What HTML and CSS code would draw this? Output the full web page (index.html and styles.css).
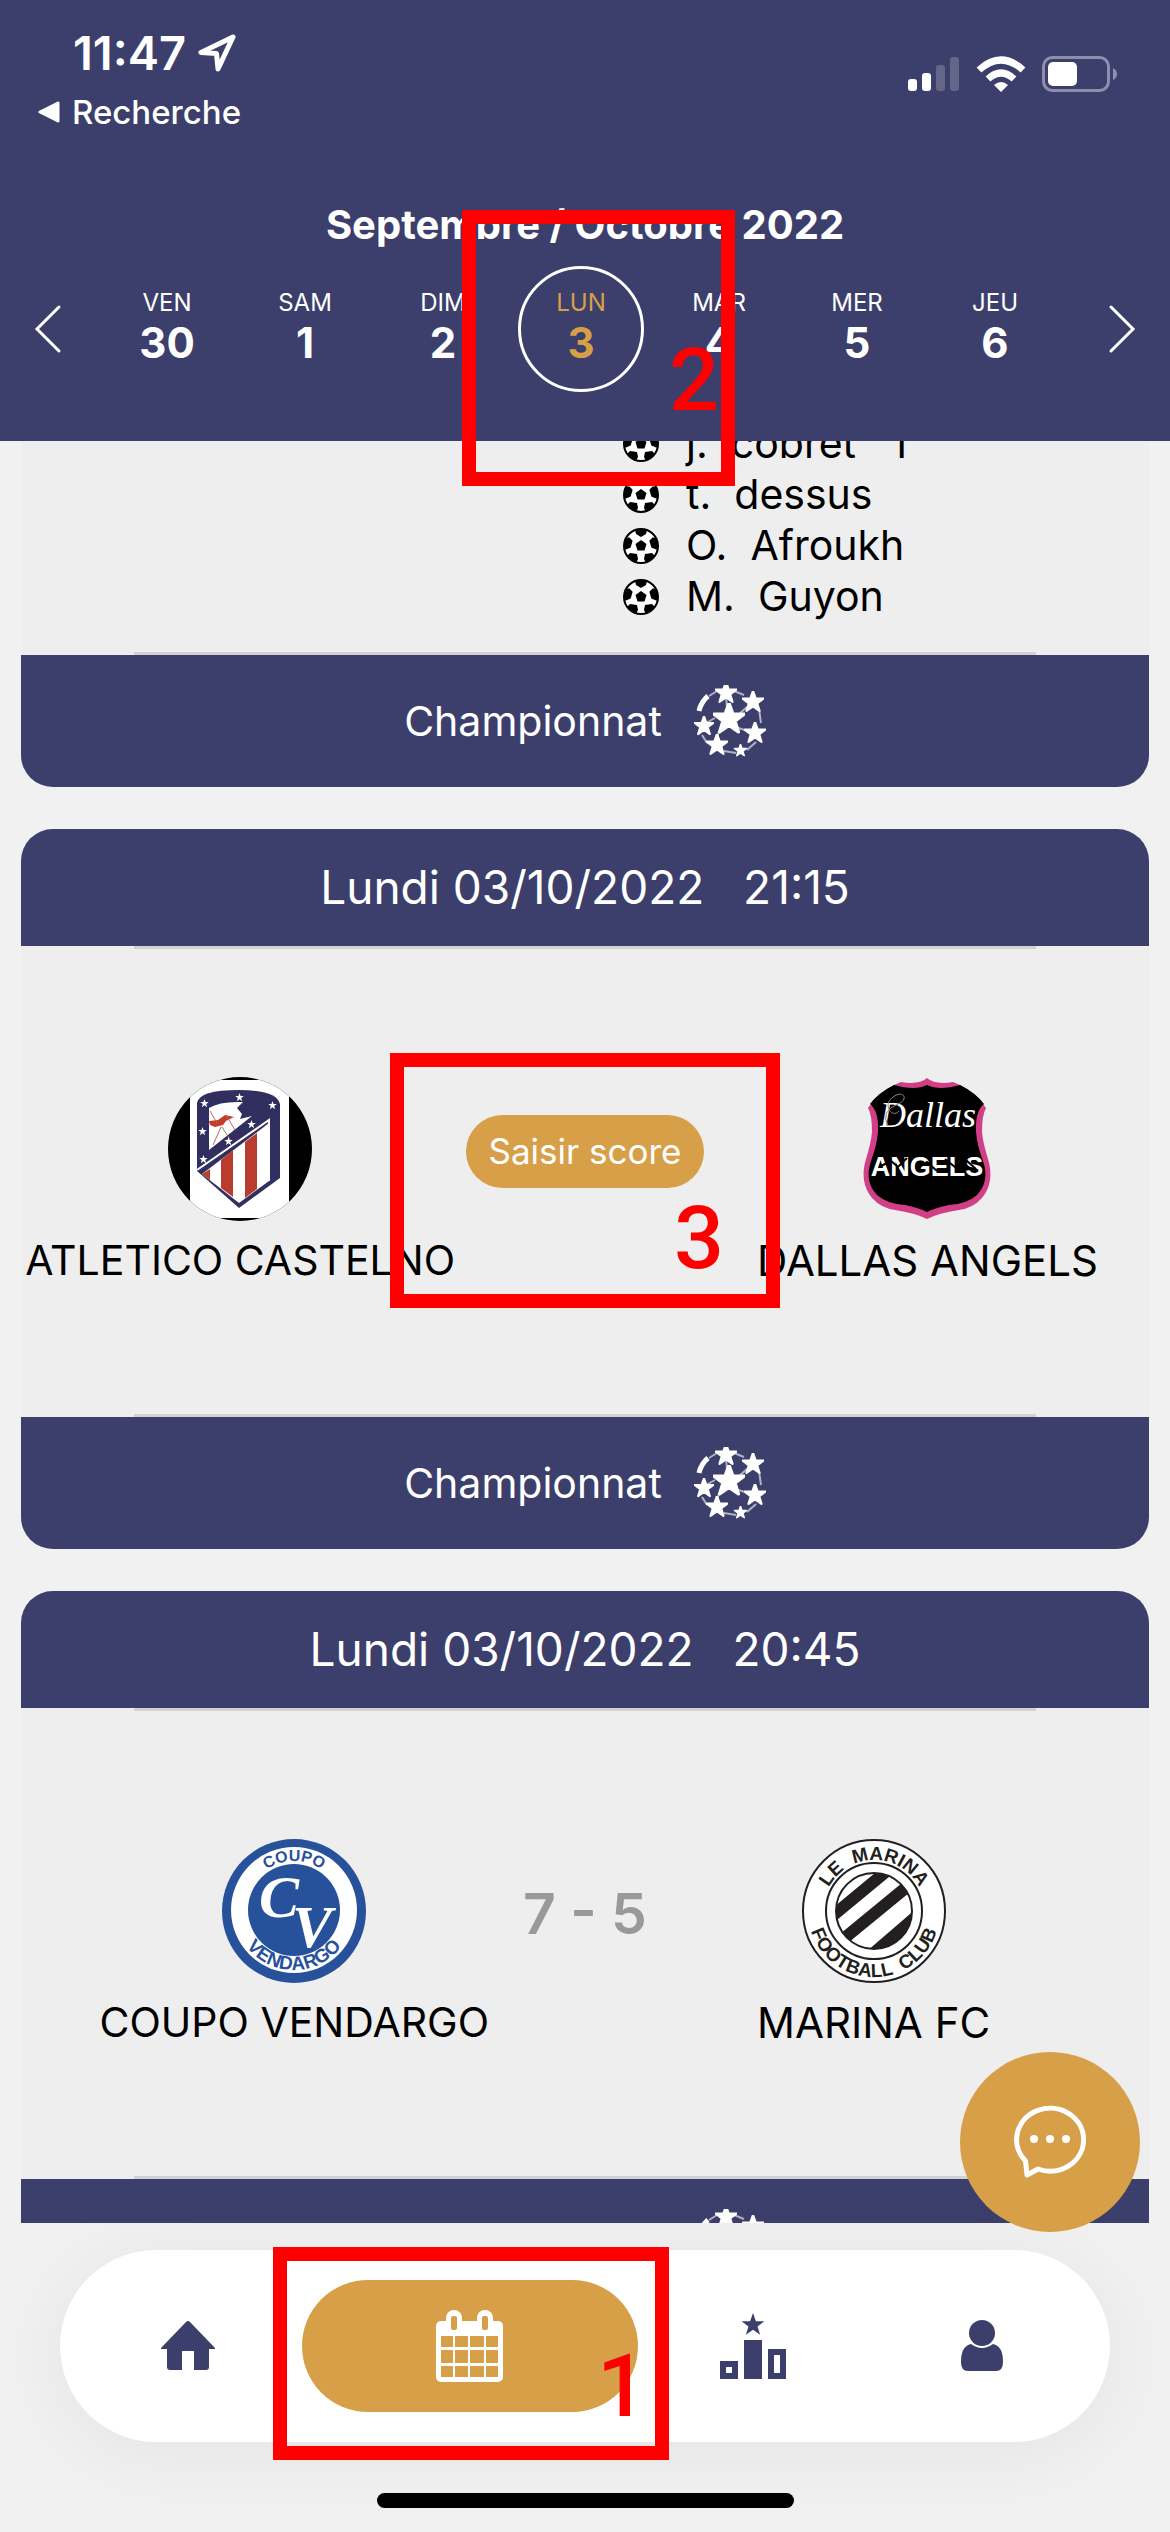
FILE: index.html
```html
<!DOCTYPE html>
<html lang="fr">
<head>
<meta charset="utf-8">
<meta name="viewport" content="width=device-width, initial-scale=1">
<title>Matchs</title>
<link rel="stylesheet" href="styles.css">
</head>
<body>
<svg class="sprite" aria-hidden="true">
  <symbol id="star" viewBox="-10 -10 20 20"><path d="M0-10 2.4-3.2 9.5-3.1 3.8 1.2 5.9 8.1 0 4-5.9 8.1-3.8 1.2-9.5-3.1-2.4-3.2Z"/></symbol>
  <symbol id="ball" viewBox="0 0 36 36">
    <circle cx="18" cy="18" r="17" fill="#fff" stroke="#000" stroke-width="2"/>
    <g fill="#000"><path d="M18 12 23.500 16 21.500 22.500H14.500L12.500 16Z"/><path d="M12 2Q18-1 24 2L23 6 18 9 13 6Z"/><path d="M35 13Q36 20 33 24L28 21 27 14 31 11Z" transform="rotate(-8 18 18)"/><path d="M1 13Q0 20 3 24L8 21 9 14 5 11Z" transform="rotate(8 18 18)"/><path d="M4 28 7 25 14 26 15 31 13 35Q8 33 4 28Z"/><path d="M32 28 29 25 22 26 21 31 23 35Q28 33 32 28Z"/></g>
  </symbol>
  <symbol id="starball" viewBox="0 0 72 72">
    <g fill="#fff" stroke="#fff" stroke-width="2" stroke-linejoin="round">
      <use href="#star" x="19" y="18" width="32" height="32"/>
      <use href="#star" x="21" y="-3" width="22" height="22"/>
      <use href="#star" x="48" y="6" width="22" height="22"/>
      <use href="#star" x="50" y="37" width="22" height="22"/>
      <use href="#star" x="39" y="59" width="15" height="13"/>
      <use href="#star" x="12" y="49" width="22" height="22"/>
      <use href="#star" x="0" y="31" width="20" height="20"/>
    </g>
    <path d="M5 26Q7 17 14 11" fill="none" stroke="#fff" stroke-width="5"/>
    <path d="M33 22 32 12M44 30 53 22M41 42 54 46M25 46 23 53M21 33 12 38M40 6 50 10M65 24 67 38M62 57 53 65M30 66 42 68M13 58 8 50M15 11 23 6" stroke="#fff" stroke-opacity=".6" stroke-width="2"/>
  </symbol>
</svg>

<header class="top">
  <div class="status">
    <div class="status-left">
      <div class="clock">11:47
        <svg width="38" height="38" viewBox="0 0 38 38"><path d="M35 3 3 18.500 18.500 19.500 20 35Z" fill="none" stroke="#fff" stroke-width="5" stroke-linejoin="round"/></svg>
      </div>
      <a class="back" href="#">
        <svg width="22" height="22" viewBox="0 0 22 22"><path d="M2 11 20 2V20Z" fill="#fff" stroke="#fff" stroke-width="3" stroke-linejoin="round"/></svg>Recherche</a>
    </div>
    <div class="status-right">
      <svg width="52" height="36" viewBox="0 0 52 36" fill="#fff"><rect y="23" width="9" height="12" rx="3"/><rect x="14" y="17" width="9" height="18" rx="3"/><g opacity=".2"><rect x="28" y="9" width="9" height="26" rx="3"/><rect x="42" y="1" width="9" height="34" rx="3"/></g></svg>
      <svg width="50" height="37" viewBox="0 0 50 37" fill="none" stroke="#fff" stroke-width="7"><path d="M3 14Q25-6 47 14"/><path d="M12 23Q25 11 38 23"/><path d="M25 36 18 29Q25 23 32 29Z" fill="#fff" stroke="none"/></svg>
      <svg width="76" height="36" viewBox="0 0 76 36"><rect x="1.500" y="1.500" width="65" height="33" rx="9" fill="none" stroke="#8c8fac" stroke-width="3"/><rect x="6" y="6" width="29" height="24" rx="5" fill="#fff"/><path d="M71 12Q75 14 75 18T71 24Z" fill="#8c8fac"/></svg>
    </div>
  </div>
  <h1>Septembre / Octobre 2022</h1>
  <div class="week">
    <button class="arrow" aria-label="Semaine précédente"><svg width="28" height="50" viewBox="0 0 28 50"><path d="M25 3 3 25 25 47" fill="none" stroke="#fff" stroke-width="3" stroke-linecap="round"/></svg></button>
    <div class="days">
      <button class="day">VEN<b>30</b></button>
      <button class="day">SAM<b>1</b></button>
      <button class="day">DIM<b>2</b></button>
      <button class="day on">LUN<b>3</b></button>
      <button class="day">MAR<b>4</b></button>
      <button class="day">MER<b>5</b></button>
      <button class="day">JEU<b>6</b></button>
    </div>
    <button class="arrow" aria-label="Semaine suivante"><svg width="28" height="50" viewBox="0 0 28 50"><path d="M3 3 25 25 3 47" fill="none" stroke="#fff" stroke-width="3" stroke-linecap="round"/></svg></button>
  </div>
</header>

<main class="matches">
  <article class="card first">
    <div class="body">
      <ul class="goals">
        <li><svg><use href="#ball"/></svg>j. &nbsp;cobret &nbsp; 1</li>
        <li><svg><use href="#ball"/></svg>t. &nbsp;dessus</li>
        <li><svg><use href="#ball"/></svg>O. &nbsp;Afroukh</li>
        <li><svg><use href="#ball"/></svg>M. &nbsp;Guyon</li>
      </ul>
      <hr>
    </div>
    <footer>Championnat<svg><use href="#starball"/></svg></footer>
  </article>

  <article class="card">
    <h2>Lundi 03/10/2022 &nbsp; 21:15</h2>
    <div class="body">
      <hr>
      <div class="teams">
        <div class="side home wide">
          <div class="team">
            <svg class="crest" viewBox="0 0 144 144">
              <clipPath id="disc"><circle cx="72" cy="72" r="72"/></clipPath>
              <g clip-path="url(#disc)">
                <rect width="144" height="144"/><rect x="22" y="3" width="99" height="138" fill="#fff"/>
                <path d="M29 26Q31 13 71 13 109 13 112 27V101L71 131 29 94Z" fill="#302f60"/>
                <path d="M34 97 101 46V104L71 126Z" fill="#fff"/>
                <path d="M53 83 65 73V120L53 111ZM77 65 89 56V112L77 121ZM34 97 42 92V103Z" fill="#b93c2e"/>
                <path d="M41 31Q52 24 75 25L69 31 74 37 72 42 84 39 41 73Z" fill="#fff"/>
                <path d="M29 93 101 43V104" fill="none" stroke="#fff" stroke-width="2"/>
                <path d="M41 44 50 43 57 38 66 40 58 44 55 48 47 50 42 48Z" fill="#c63c2b"/>
                <path d="M42 34 49 46M58 38 67 53M54 50 63 64M53 50 45 68" fill="none" stroke="#b96b5f"/>
                <g fill="#fff"><use href="#star" x="67" y="16" width="9" height="9"/><use href="#star" x="32" y="22" width="9" height="9"/><use href="#star" x="100" y="24" width="9" height="9"/><use href="#star" x="79" y="43" width="9" height="9"/><use href="#star" x="30" y="50" width="9" height="9"/><use href="#star" x="56" y="60" width="9" height="9"/><use href="#star" x="31" y="78" width="9" height="9"/></g>
              </g>
            </svg>
            <span>ATLETICO CASTELNO</span>
          </div>
        </div>
        <div class="middle"><button class="enter">Saisir score</button></div>
        <div class="side">
          <div class="team">
            <svg class="crest" viewBox="0 0 144 144">
              <path d="M72 1Q80 8 98 5L105 8Q121 16 131 31 127 38 127 55 128 66 133 82 140 105 127 121 118 131 104 133 84 136 72 142 60 136 40 133 26 131 17 121 4 105 11 82 16 66 17 55 17 38 13 31 23 16 39 8L46 5Q64 8 72 1Z" fill="#d33f86"/>
              <path d="M72 8Q84 14 105 8 121 16 129 27 120 34 121 55 122 68 128 84 135 104 122 118 112 127 94 128 80 131 72 135 64 131 50 128 32 127 22 118 9 104 16 84 22 68 23 55 24 34 15 27 23 16 39 8 60 14 72 8Z"/>
              <text x="73" y="50" class="script">Dallas</text>
              <path d="M33 49Q25 34 43 27C54 23 49 12 38 20S37 42 44 34" fill="none" stroke="#888"/>
              <text x="72" y="99" class="angels">ANGELS</text>
              <path d="M24 90 36 84 43 90 52 81M62 92 72 85 82 94M90 82 100 90 112 84 121 92" fill="none" stroke="#000" stroke-width="2"/>
            </svg>
            <span>DALLAS ANGELS</span>
          </div>
        </div>
      </div>
      <hr>
    </div>
    <footer>Championnat<svg><use href="#starball"/></svg></footer>
  </article>

  <article class="card">
    <h2>Lundi 03/10/2022 &nbsp; 20:45</h2>
    <div class="body">
      <hr>
      <div class="teams">
        <div class="side home">
          <div class="team">
            <svg class="crest" viewBox="0 0 144 144">
              <circle cx="72" cy="72" r="72" fill="#28519c"/><circle cx="72" cy="71" r="63" fill="#fff"/><circle cx="72" cy="71" r="46" fill="#28519c"/>
              <path id="cv-top" d="M23 71A49 49 0 0 1 121 71" fill="none"/><path id="cv-bottom" d="M12 71A60 60 0 0 0 132 71" fill="none"/>
              <text class="ring blue"><textPath href="#cv-top" startOffset="50%">COUPO</textPath></text>
              <text class="ring blue large"><textPath href="#cv-bottom" startOffset="50%">VENDARGO</textPath></text>
              <text x="57" y="78" class="mono">C</text><text x="90" y="108" class="mono">V</text>
            </svg>
            <span>COUPO VENDARGO</span>
          </div>
        </div>
        <div class="middle"><strong class="score">7 - 5</strong></div>
        <div class="side">
          <div class="team">
            <svg class="crest" viewBox="0 0 144 144">
              <circle cx="72" cy="72" r="71" fill="#fff" stroke="#231f20" stroke-width="2"/><circle cx="72" cy="72" r="48" fill="#fff" stroke="#231f20" stroke-width="2"/>
              <clipPath id="core"><circle cx="72" cy="72" r="38"/></clipPath>
              <g clip-path="url(#core)"><path d="M22 84 92 26M34 106 112 42M58 126 130 64" stroke="#231f20" stroke-width="12"/></g>
              <circle cx="72" cy="72" r="38" fill="none" stroke="#231f20" stroke-width="2"/>
              <path id="m-top" d="M21 72A51 51 0 0 1 123 72" fill="none"/><path id="m-bottom" d="M6 72A66 66 0 0 0 138 72" fill="none"/>
              <text class="ring dark"><textPath href="#m-top" startOffset="50%">LE &#160;MARINA</textPath></text>
              <text class="ring dark"><textPath href="#m-bottom" startOffset="50%">FOOTBALL &#160;CLUB</textPath></text>
            </svg>
            <span>MARINA FC</span>
          </div>
        </div>
      </div>
      <hr>
    </div>
    <footer>Championnat<svg><use href="#starball"/></svg></footer>
  </article>
</main>

<div class="bottom">
  <nav>
    <a href="#" aria-label="Accueil"><svg width="54" height="50" viewBox="0 0 54 50" fill="#3c3f6b"><path d="M25 1Q27-1 29 1L54 27V28H48V46Q48 49 45 49H33V30H21V49H9Q6 49 6 46V28H0V27Z"/></svg></a>
    <a href="#" class="on" aria-label="Calendrier"><svg width="68" height="72" viewBox="0 0 68 72">
      <rect x="0" y="11" width="67" height="61" rx="5" fill="#fff"/><rect x="10" y="0" width="16" height="24" rx="8" fill="#fff"/><rect x="41" y="0" width="16" height="24" rx="8" fill="#fff"/>
      <g fill="#d79f48"><rect x="15" y="6" width="6" height="14" rx="2"/><rect x="46" y="6" width="6" height="14" rx="2"/><path d="M5 26H17V37H5ZM19 26H32V37H19ZM34 26H48V37H34ZM50 26H62V37H50ZM5 40H17V53H5ZM19 40H32V53H19ZM34 40H48V53H34ZM50 40H62V53H50ZM5 56H17V67H5ZM19 56H32V67H19ZM34 56H48V67H34ZM50 56H62V67H50Z"/></g></svg></a>
    <a href="#" aria-label="Classement"><svg width="66" height="66" viewBox="0 0 66 66" fill="#3c3f6b"><use href="#star" x="21" y="0" width="24" height="24"/><path d="M24 27H42V66H24Z"/><path fill-rule="evenodd" d="M0 48H18V66H0ZM6 54V60H12V54ZM48 36H66V66H48ZM54 42V60H60V42Z"/></svg></a>
    <a href="#" aria-label="Profil"><svg width="44" height="52" viewBox="0 0 44 52" fill="#3c3f6b"><circle cx="22" cy="13" r="13"/><path d="M11 24Q22 32 33 24 43 26 43 42 43 51 36 51H8Q1 51 1 42 1 26 11 24Z"/></svg></a>
  </nav>
  <div class="home-bar"></div>
  <button class="chat" aria-label="Messages"><svg width="72" height="74" viewBox="0 0 72 74" fill="none" stroke="#fff" stroke-width="5" stroke-linejoin="round"><path d="M11.500 56A33.500 31.500 0 1 1 24 64L13 70Z"/><g fill="#fff" stroke="none"><circle cx="20" cy="34" r="4"/><circle cx="36" cy="34" r="4"/><circle cx="52" cy="34" r="4"/></g></svg></button>
</div>

<div class="mark two"><span>2</span></div>
<div class="mark three"><span>3</span></div>
<div class="mark one"><span>1</span></div>
</body>
</html>
```
FILE: styles.css
```css
* { box-sizing: border-box; margin: 0; padding: 0; }

body {
  position: relative;
  display: flex;
  flex-direction: column;
  height: 100vh;
  overflow: hidden;
  background: #f1f1f1;
  color: #000;
  font-family: Inter, "Liberation Sans", sans-serif;
  font-size: 41px;
  line-height: 51px;
}

button { border: 0; background: none; color: inherit; font: inherit; cursor: pointer; }
a { color: inherit; text-decoration: none; }
.sprite { position: absolute; width: 0; height: 0; }

/* Header */
.top { flex: none; height: 441px; background: #3c3f6b; color: #fff; }
.status { display: flex; justify-content: space-between; height: 200px; padding: 26px 52px 0 38px; }
.clock { display: flex; align-items: center; gap: 12px; padding-left: 35px; font-size: 47px; font-weight: 600; line-height: 54px; }
.back { display: flex; align-items: center; gap: 12px; margin-top: 8px; font-size: 33px; font-weight: 500; line-height: 48px; }
.status-right { display: flex; align-items: flex-start; gap: 16px; padding-top: 30px; }
.top h1 { font-size: 40px; font-weight: 700; line-height: 50px; text-align: center; }
.week { display: flex; align-items: center; justify-content: space-between; margin-top: 16px; padding: 0 34px; }
.arrow { display: flex; }
.days { display: grid; grid-template-columns: repeat(7, 1fr); flex: 1; padding: 0 44px 0 36px; }
.day {
  display: flex;
  flex-direction: column;
  align-items: center;
  justify-content: center;
  justify-self: center;
  width: 126px;
  height: 126px;
  padding-bottom: 4px;
  font-size: 24px;
  line-height: 32px;
}
.day b { font-size: 42px; line-height: 48px; }
.day.on { border: 3px solid #fff; border-radius: 50%; color: #d79f48; }

/* Matches */
.matches { flex: 1; min-height: 0; overflow: hidden; padding: 0 21px; }
.card { margin-bottom: 42px; border-radius: 32px; overflow: hidden; background: #eee; }
.card h2 { height: 117px; background: #3c3f6b; color: #fff; font-size: 46px; font-weight: 400; line-height: 117px; text-align: center; }
.card hr { width: 80%; height: 3px; margin: 0 auto; border: 0; background: #d3d2d3; }
.card footer {
  display: flex;
  align-items: center;
  justify-content: center;
  gap: 32px;
  height: 132px;
  background: #3c3f6b;
  color: #fff;
}
.card footer svg { width: 72px; height: 72px; }
.card.first { margin-top: -23px; border-radius: 0 0 32px 32px; }
.goals { padding: 0 0 30px 602px; list-style: none; }
.goals li { display: flex; align-items: center; gap: 27px; white-space: nowrap; }
.goals svg { width: 36px; height: 36px; }

.teams { display: grid; grid-template-columns: minmax(0, 1fr) 192px minmax(0, 1fr); padding: 128px 0; }
.side { display: flex; padding-left: 76px; font-size: 42px; white-space: nowrap; }
.side.home { justify-content: flex-end; padding-left: 0; font-size: 41px; }
.side.wide { padding-right: 34px; }
.team { display: flex; flex-direction: column; align-items: center; gap: 14px; }
.crest { width: 144px; height: 144px; }
.middle { display: flex; align-items: center; justify-content: center; height: 148px; }
.enter { flex: none; width: 238px; height: 73px; border-radius: 37px; background: #d79f48; color: #fff; font-size: 35px; }
.score { color: #999; font-size: 57px; font-weight: 600; }

.script { fill: #fff; font: italic 36px "Liberation Serif", serif; text-anchor: middle; }
.angels { fill: #fff; font: bold 27px "Liberation Sans", sans-serif; text-anchor: middle; }
.ring { text-anchor: middle; font: bold 19px "Liberation Sans", sans-serif; }
.blue { fill: #28519c; font-size: 16px; }
.large { font-size: 19px; }
.dark { fill: #231f20; }
.mono { fill: #fff; font: italic bold 60px "Liberation Serif", serif; text-anchor: middle; }

/* Bottom bar */
.bottom { position: relative; flex: none; height: 309px; padding: 27px 60px 0; }
.bottom nav {
  display: flex;
  height: 192px;
  padding: 30px 13px;
  border-radius: 96px;
  background: #fff;
  box-shadow: 0 10px 90px rgba(0, 0, 0, .06);
}
.bottom nav a { display: flex; flex: 1; align-items: center; justify-content: center; }
.bottom nav a.on { flex: none; width: 336px; border-radius: 66px; background: #d79f48; }
.home-bar { width: 417px; height: 15px; margin: 51px auto 0; border-radius: 8px; background: #000; }
.chat {
  position: absolute;
  top: -171px;
  right: 30px;
  display: flex;
  align-items: center;
  justify-content: center;
  width: 180px;
  height: 180px;
  border-radius: 50%;
  background: #d79f48;
}

/* Numbered step markers laid over the screen */
.mark { position: absolute; border: 14px solid #f00; color: #f00; font: 500 88px/88px Roboto, sans-serif; }
.mark span { position: absolute; }
.two { left: 462px; top: 210px; width: 273px; height: 276px; }
.two span { right: 2px; bottom: 48px; }
.three { left: 390px; top: 1053px; width: 390px; height: 255px; }
.three span { right: 42px; bottom: 12px; }
.one { left: 273px; top: 2247px; width: 396px; height: 213px; }
.one span { right: 8px; bottom: 16px; }
```
